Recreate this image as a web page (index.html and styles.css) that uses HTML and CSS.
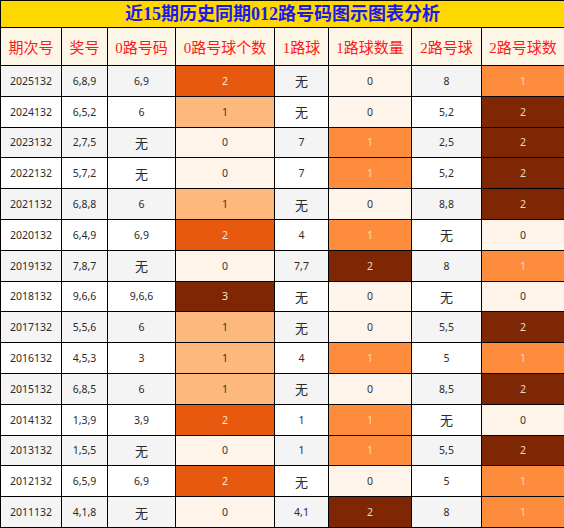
FILE: index.html
```html
<!DOCTYPE html>
<html lang="zh-CN">
<head>
<meta charset="utf-8">
<title>近15期历史同期012路号码图示图表分析</title>
<link rel="stylesheet" href="styles.css">
</head>
<body>
<table class="chart">
  <colgroup>
    <col class="c1"><col class="c2"><col class="c3"><col class="c4"><col class="c5"><col class="c6"><col class="c7"><col class="c8">
  </colgroup>
  <thead>
    <tr class="title-row"><th colspan="8" class="title">近15期历史同期012路号码图示图表分析</th></tr>
    <tr class="head-row">
      <th>期次号</th><th>奖号</th><th>0路号码</th><th>0路号球个数</th><th>1路球</th><th>1路球数量</th><th>2路号球</th><th>2路号球数</th>
    </tr>
  </thead>
  <tbody>
    <tr><td>2025132</td><td>6,8,9</td><td>6,9</td><td class="z2">2</td><td class="wu">无</td><td class="v0">0</td><td>8</td><td class="v1">1</td></tr>
    <tr><td>2024132</td><td>6,5,2</td><td>6</td><td class="z1">1</td><td class="wu">无</td><td class="v0">0</td><td>5,2</td><td class="v2">2</td></tr>
    <tr><td>2023132</td><td>2,7,5</td><td class="wu">无</td><td class="v0">0</td><td>7</td><td class="v1">1</td><td>2,5</td><td class="v2">2</td></tr>
    <tr><td>2022132</td><td>5,7,2</td><td class="wu">无</td><td class="v0">0</td><td>7</td><td class="v1">1</td><td>5,2</td><td class="v2">2</td></tr>
    <tr><td>2021132</td><td>6,8,8</td><td>6</td><td class="z1">1</td><td class="wu">无</td><td class="v0">0</td><td>8,8</td><td class="v2">2</td></tr>
    <tr><td>2020132</td><td>6,4,9</td><td>6,9</td><td class="z2">2</td><td>4</td><td class="v1">1</td><td class="wu">无</td><td class="v0">0</td></tr>
    <tr><td>2019132</td><td>7,8,7</td><td class="wu">无</td><td class="v0">0</td><td>7,7</td><td class="v2">2</td><td>8</td><td class="v1">1</td></tr>
    <tr><td>2018132</td><td>9,6,6</td><td>9,6,6</td><td class="z3">3</td><td class="wu">无</td><td class="v0">0</td><td class="wu">无</td><td class="v0">0</td></tr>
    <tr><td>2017132</td><td>5,5,6</td><td>6</td><td class="z1">1</td><td class="wu">无</td><td class="v0">0</td><td>5,5</td><td class="v2">2</td></tr>
    <tr><td>2016132</td><td>4,5,3</td><td>3</td><td class="z1">1</td><td>4</td><td class="v1">1</td><td>5</td><td class="v1">1</td></tr>
    <tr><td>2015132</td><td>6,8,5</td><td>6</td><td class="z1">1</td><td class="wu">无</td><td class="v0">0</td><td>8,5</td><td class="v2">2</td></tr>
    <tr><td>2014132</td><td>1,3,9</td><td>3,9</td><td class="z2">2</td><td>1</td><td class="v1">1</td><td class="wu">无</td><td class="v0">0</td></tr>
    <tr><td>2013132</td><td>1,5,5</td><td class="wu">无</td><td class="v0">0</td><td>1</td><td class="v1">1</td><td>5,5</td><td class="v2">2</td></tr>
    <tr><td>2012132</td><td>6,5,9</td><td>6,9</td><td class="z2">2</td><td class="wu">无</td><td class="v0">0</td><td>5</td><td class="v1">1</td></tr>
    <tr><td>2011132</td><td>4,1,8</td><td class="wu">无</td><td class="v0">0</td><td>4,1</td><td class="v2">2</td><td>8</td><td class="v1">1</td></tr>
  </tbody>
</table>
</body>
</html>
```

FILE: styles.css
```css
html, body {
  margin: 0;
  padding: 0;
  background: #ffffff;
}

.chart {
  width: 564px;
  border-collapse: collapse;
  table-layout: fixed;
  font-family: "Noto Sans", "Noto Sans CJK SC", sans-serif;
  color: #2b2b2b;
}

.c1 { width: 61px; }
.c2 { width: 46px; }
.c3 { width: 68px; }
.c4 { width: 99px; }
.c5 { width: 54px; }
.c6 { width: 83px; }
.c7 { width: 70px; }
.c8 { width: 83px; }

.chart th,
.chart td {
  border: 1px solid #000000;
  padding: 0;
  text-align: center;
  vertical-align: middle;
}

.title-row { height: 27px; }

.title {
  background: #ffd800;
  color: #1a1aee;
  font-family: "Liberation Serif", "Noto Sans CJK SC", serif;
  font-weight: bold;
  font-size: 18px;
  line-height: 20px;
}

.head-row { height: 38px; }

.head-row th {
  background: #fdf5e6;
  color: #ff1a1a;
  font-family: "Liberation Serif", "Noto Sans CJK SC", serif;
  font-weight: normal;
  font-size: 15px;
}

.chart tbody tr { height: 30.8px; }

.chart td {
  font-size: 10.5px;
  background: #ffffff;
}

.chart tbody tr:nth-child(odd) td { background: #f4f4f4; }

.chart td.wu { font-size: 13px; }

.chart tbody tr td.v0 { background: #fef4e9; color: #333333; }

.chart tbody tr td.z1 { background: #fdb97d; color: #333333; }
.chart tbody tr td.z2 { background: #e6590f; color: #fbe6d6; }
.chart tbody tr td.z3 { background: #7f2704; color: #f7e8dc; }

.chart tbody tr td.v1 { background: #fd8d3c; color: #fedcc0; }
.chart tbody tr td.v2 { background: #7f2704; color: #f0d9c8; }
```
